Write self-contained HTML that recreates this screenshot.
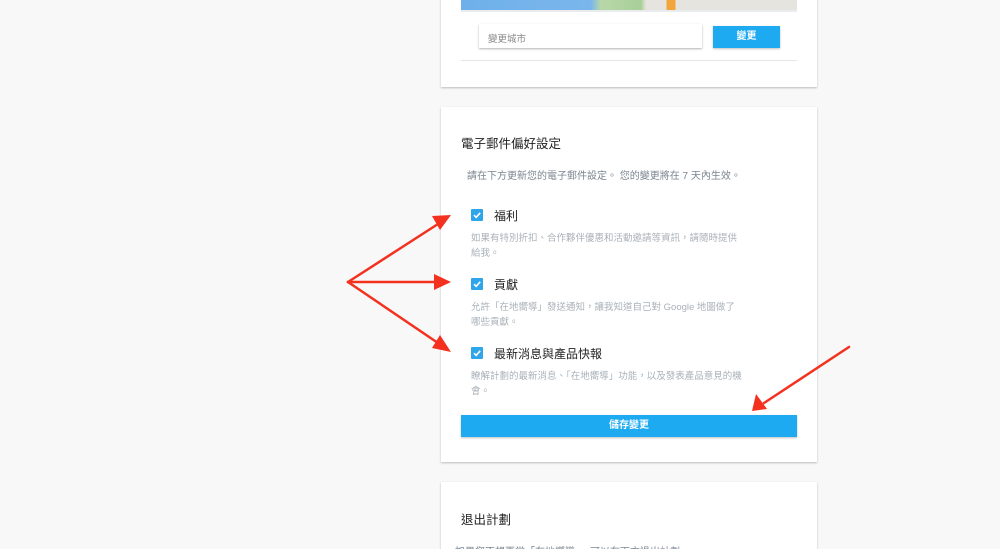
<!DOCTYPE html>
<html><head><meta charset="utf-8"><style>
*{box-sizing:border-box;margin:0;padding:0}
html,body{width:1000px;height:549px;overflow:hidden}
body{background:#f8f8f8;font-family:"Liberation Sans","Noto Sans CJK TC",sans-serif;position:relative}
.card{position:absolute;left:441px;width:376px;background:#fff;box-shadow:0 1px 2px rgba(0,0,0,.25)}
.abs{position:absolute}
.cb{position:absolute;left:471px;width:12px;height:12px;background:#2fa6ea;border-radius:1px}
.cb svg{position:absolute;left:0;top:0}
.lbl{position:absolute;left:494px;font-size:12px;color:#222}
.desc{position:absolute;left:471px;font-size:9.5px;color:#a9b1b8;line-height:15px;width:272px}
</style></head><body>
<div class="card" style="top:-5px;height:92px">
  <div class="abs" style="left:20px;top:5px;width:336px;height:10px;background:linear-gradient(90deg,#6fb0ea 0,#7ab6ec 130px,#b8d7a8 140px,#a8cf98 180px,#e6e4df 185px,#e6e4df 205px,#f2a53a 206px,#f2a53a 214px,#e6e4df 215px,#e6e4df 100%)"></div>
  <div class="abs" style="left:20px;top:15px;width:336px;height:2px;background:#e8ecee"></div>
  <div class="abs" style="left:38px;top:29px;width:223px;height:24px;background:#fff;box-shadow:0 1px 2px rgba(0,0,0,.3);font-size:9.5px;color:#888;padding:7px 9px">變更城市</div>
  <div class="abs" style="left:272px;top:31px;width:67px;height:22px;background:#1eaaf1;color:#fff;font-size:10px;font-weight:bold;text-align:center;line-height:22px;box-shadow:0 1px 2px rgba(0,0,0,.25)">變更</div>
  <div class="abs" style="left:20px;top:65px;width:336px;height:1px;background:#e2e6e8"></div>
</div>
<div class="card" style="top:107px;height:355px"></div>
<div class="abs" style="left:461px;top:133px;font-size:12.5px;color:#222">電子郵件偏好設定</div>
<div class="abs" style="left:467px;top:167px;font-size:10px;color:#7a8590">請在下方更新您的電子郵件設定。 您的變更將在 7 天內生效。</div>
<div class="cb" style="top:209px"><svg width="12" height="12"><path d="M3 6.2 L5.2 8.3 L9.2 3.8" fill="none" stroke="#fff" stroke-width="1.6"/></svg></div><div class="lbl" style="top:207px">福利</div>
<div class="desc" style="top:231px">如果有特別折扣、合作夥伴優惠和活動邀請等資訊，請隨時提供給我。</div>
<div class="cb" style="top:278px"><svg width="12" height="12"><path d="M3 6.2 L5.2 8.3 L9.2 3.8" fill="none" stroke="#fff" stroke-width="1.6"/></svg></div><div class="lbl" style="top:276px">貢獻</div>
<div class="desc" style="top:300px">允許「在地嚮導」發送通知，讓我知道自己對 Google 地圖做了哪些貢獻。</div>
<div class="cb" style="top:347px"><svg width="12" height="12"><path d="M3 6.2 L5.2 8.3 L9.2 3.8" fill="none" stroke="#fff" stroke-width="1.6"/></svg></div><div class="lbl" style="top:345px">最新消息與產品快報</div>
<div class="desc" style="top:369px">瞭解計劃的最新消息、「在地嚮導」功能，以及發表產品意見的機會。</div>
<div class="abs" style="left:461px;top:415px;width:336px;height:22px;background:#1eaaf1;color:#fff;font-size:10px;font-weight:bold;text-align:center;line-height:22px;box-shadow:0 1px 2px rgba(0,0,0,.25)">儲存變更</div>
<div class="card" style="top:482px;height:80px"></div>
<div class="abs" style="left:461px;top:509px;font-size:12.5px;color:#222">退出計劃</div>
<div class="abs" style="left:455px;top:543px;font-size:10px;color:#7a8590">如果您不想再當「在地嚮導」，可以在下方退出計劃。</div>
<svg class="abs" style="left:0;top:0" width="1000" height="549">
<g fill="none" stroke="#f4311f" stroke-width="2.5" stroke-linecap="round">
<path d="M348 282 L438 224"/><path d="M348 282 L436 282"/><path d="M348 282 L438 343"/><path d="M849 347 L764 403"/>
</g>
<g fill="#f4311f">
<polygon points="451,215 432,216 440,230"/>
<polygon points="451,282 434,274 434,290"/>
<polygon points="451,352 440,335 432,348"/>
<polygon points="752,411 756,394 767,409"/>
</g>
</svg>
</body></html>
